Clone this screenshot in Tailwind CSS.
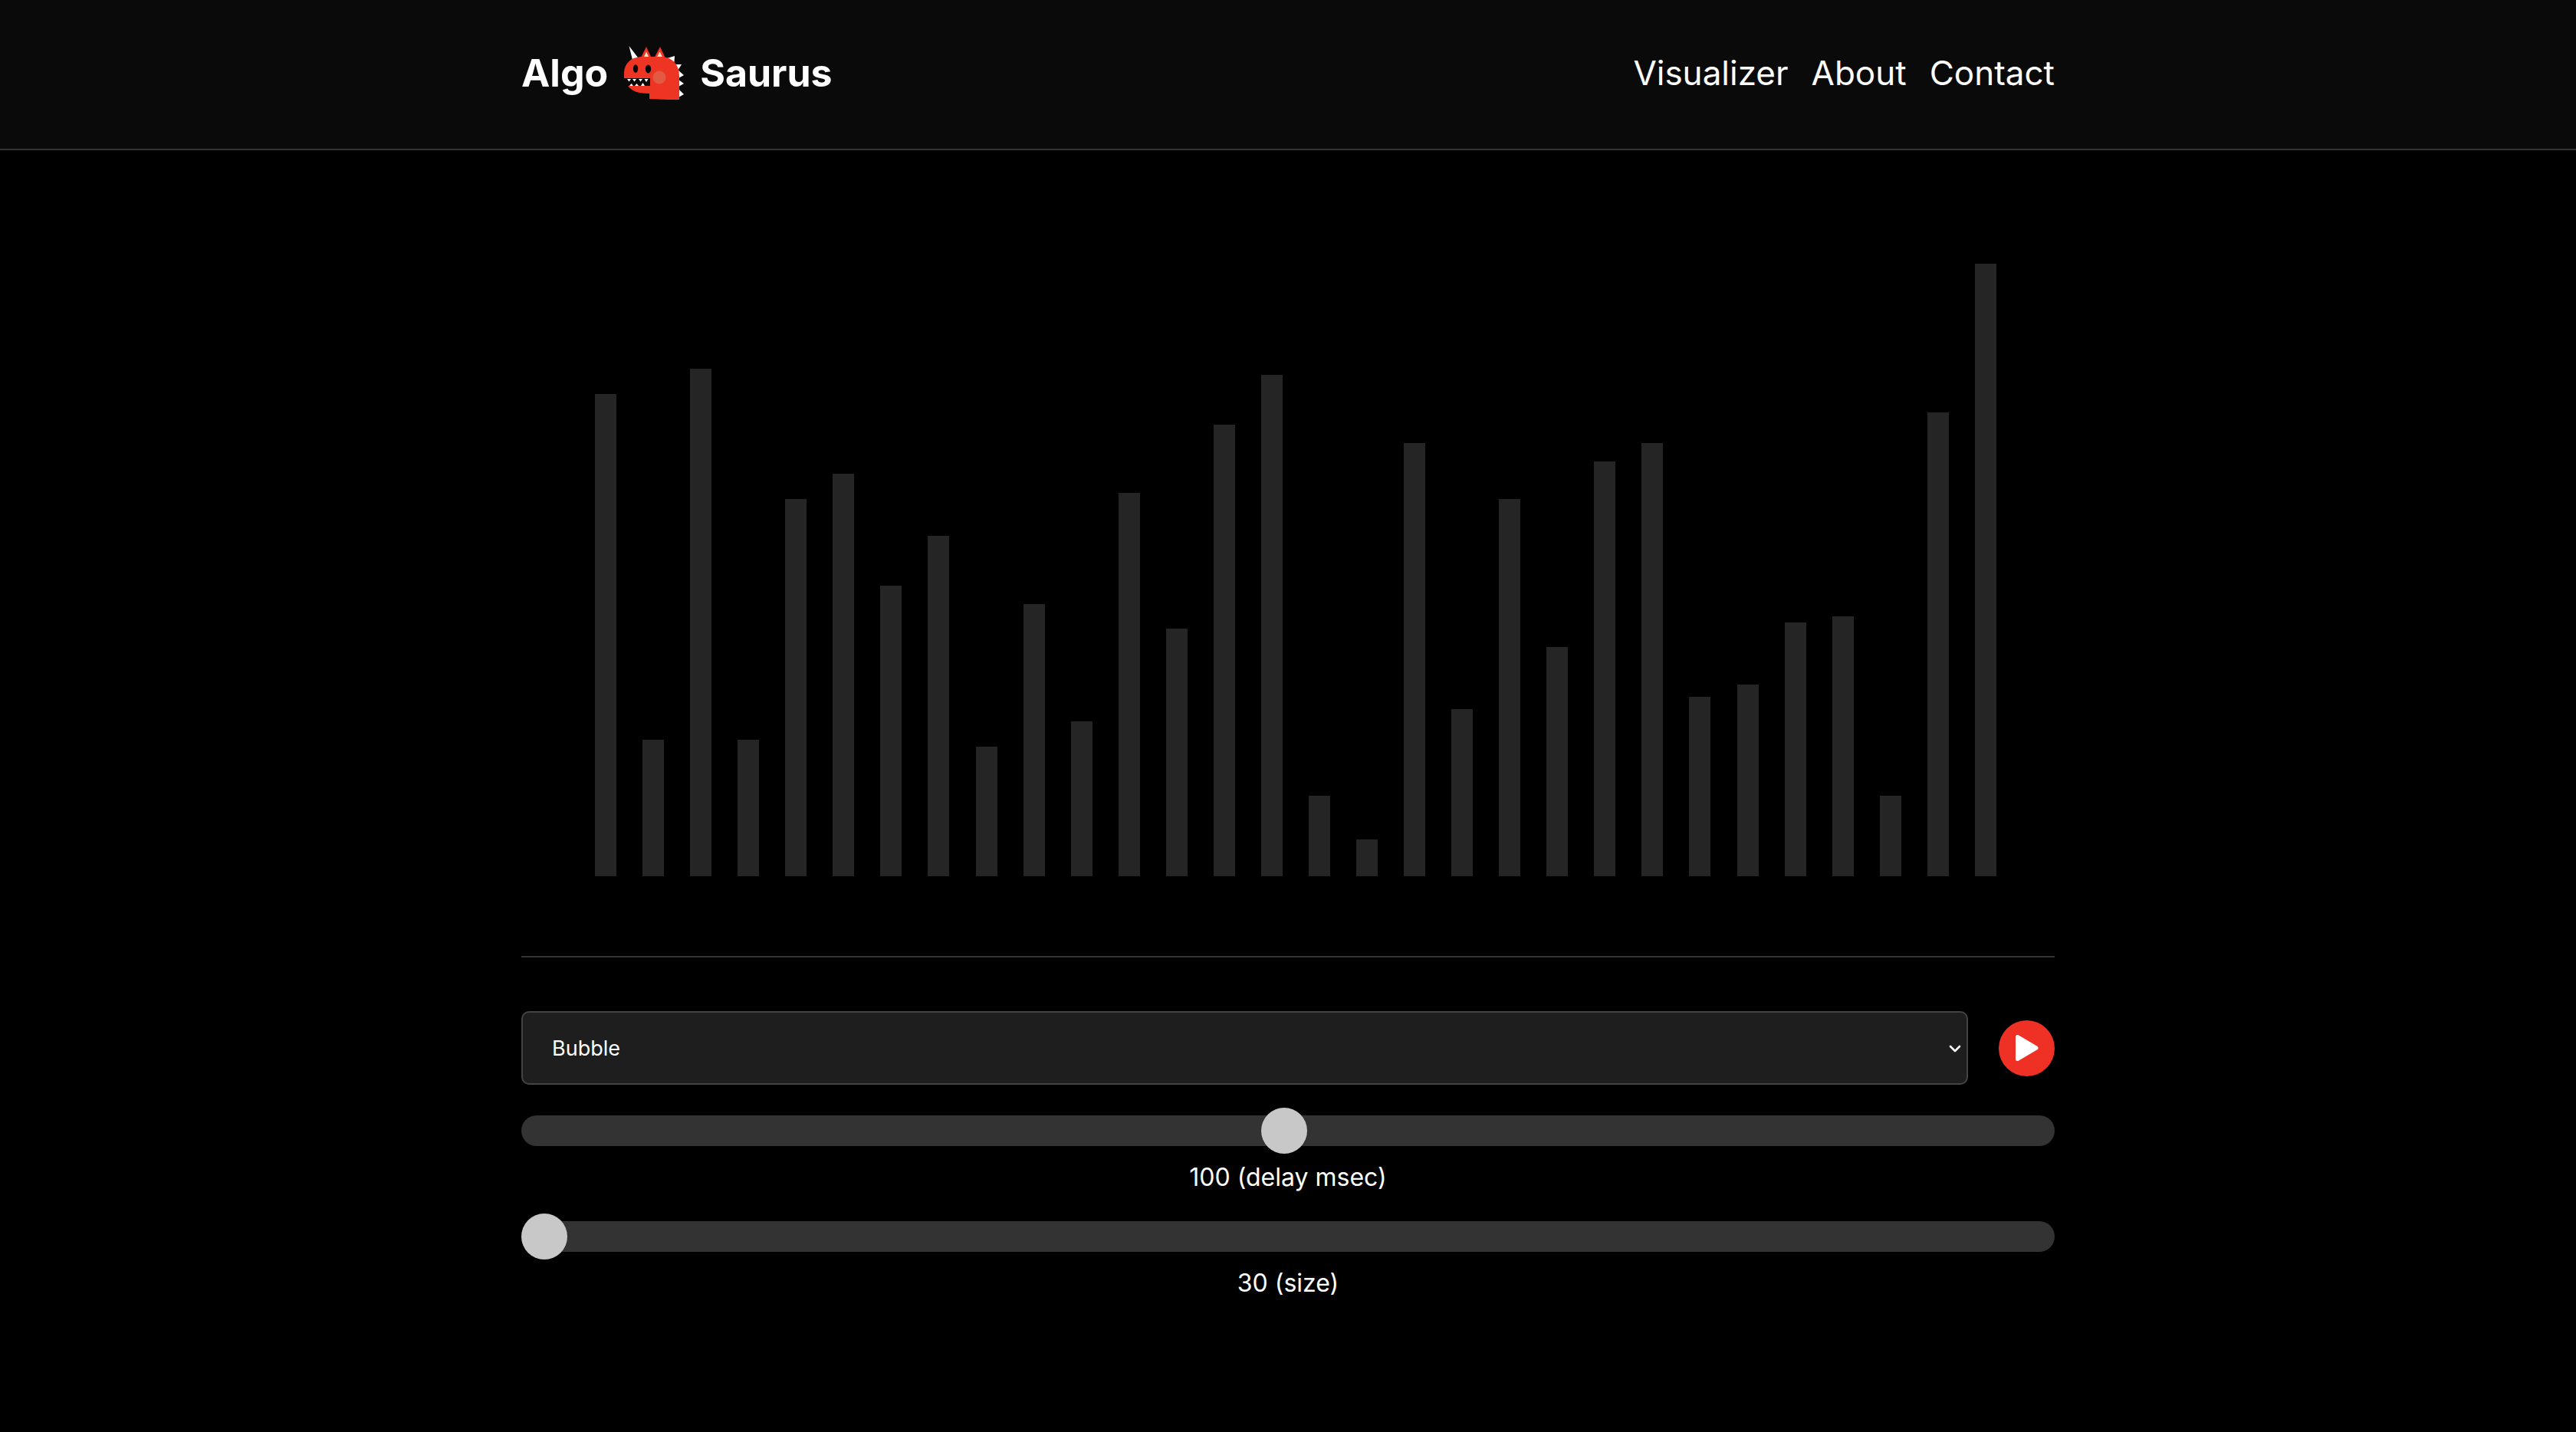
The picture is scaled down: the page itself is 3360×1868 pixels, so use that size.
<!DOCTYPE html>
<html lang="en">
<head>
<meta charset="utf-8">
<meta name="viewport" content="width=device-width, initial-scale=1">
<title>Algo Saurus</title>
<script src="https://cdn.jsdelivr.net/npm/@tailwindcss/browser@4"></script>
</head>
<body class="min-h-screen bg-black font-[Inter,sans-serif] text-white">
<header class="border-b-2 border-[#333] bg-[#0a0a0a]">
  <div class="mx-auto flex h-[194px] max-w-[2000px] items-center justify-between pb-1">
    <a href="#" class="flex items-center gap-5 text-[50px] leading-none font-bold">
      <span>Algo</span>
      <svg class="h-[74px] w-20" viewBox="0 0 80 74" aria-hidden="true">
        <path fill="#fff" d="M7.500 2 19 17 12 20zM57 18 67 15 66.500 23zM66 26 76 26 71 34zM72 34 79 40 72 44zM72 46 79 51 72 55zM72 58 79 65 72 69z"/>
        <path fill="#ee3524" d="M22.500 18 30 3 37 18zM40 18 48 3 55 18zM1 44V36C2 24 10 17 23 16H50C65 17 73 27 73 41V72H58L34 71V64C20 64 11 61 6 54H35V44z"/>
        <path fill="#ffe3c2" d="M27 16 30 9.500 33 16zM44 16 47.500 9.500 51 16z"/>
        <ellipse cx="16" cy="31.500" rx="3.200" ry="5.200" fill="#080505"/>
        <ellipse cx="32.500" cy="32" rx="3.700" ry="5.400" fill="#080505"/>
        <circle cx="47" cy="43" r="8.500" fill="#e35a43"/>
        <path fill="#fff" d="M5 45h5l-2.500 3.500zM12 45h5l-2.500 3.500zM20 45h5l-2.500 3.500zM27.500 45h5l-2.500 4zM8 54l2.500-3 2.500 3zM15 54l2.500-3 2.500 3zM23 54l2.500-4 2.500 4z"/>
      </svg>
      <span>Saurus</span>
    </a>
    <nav class="flex gap-[30px] text-[44px] leading-none">
      <a href="#">Visualizer</a>
      <a href="#">About</a>
      <a href="#">Contact</a>
    </nav>
  </div>
</header>
<main class="mx-auto max-w-[2000px]">
  <section id="bars" aria-label="Values to sort" class="mt-[140px] flex h-[807px] items-end justify-between pr-[76px] pl-24"></section>
  <hr class="mt-[104px] border-t-2 border-[#333]">
  <form class="mt-[70px]">
    <div class="flex items-center gap-10">
      <div class="relative flex-1">
        <select aria-label="Algorithm" class="block h-24 w-full appearance-none rounded-[10px] border-2 border-[#444] bg-[#1e1e1e] px-[38px] pt-0.5 text-[27px]">
          <option>Bubble</option>
        </select>
        <svg class="pointer-events-none absolute top-[44px] right-[9px] h-[10px] w-4" viewBox="0 0 16 10" fill="none" stroke="#fff" stroke-width="2.600" stroke-linecap="round" stroke-linejoin="round" aria-hidden="true"><path d="M2 2l6 6 6-6"/></svg>
      </div>
      <button type="button" aria-label="Play" class="block size-[73px] rounded-full bg-[#ee3124]">
        <svg class="size-full" viewBox="0 0 73 73" fill="#fff" stroke="#fff" stroke-width="5" stroke-linejoin="round" aria-hidden="true"><path d="M24.500 21.500v29L49 36z"/></svg>
      </button>
    </div>
    <input id="delay" type="range" min="1" max="200" value="100" class="mt-10 block h-10 w-full appearance-none rounded-full bg-[#333] [&::-webkit-slider-thumb]:size-[60px] [&::-webkit-slider-thumb]:appearance-none [&::-webkit-slider-thumb]:rounded-full [&::-webkit-slider-thumb]:bg-[#c8c8c8]">
    <label for="delay" class="mt-5 block pt-0.5 text-center text-[32px] leading-[38px]">100 (delay msec)</label>
    <input id="size" type="range" min="30" max="100" value="30" class="mt-[38px] block h-10 w-full appearance-none rounded-full bg-[#333] [&::-webkit-slider-thumb]:size-[60px] [&::-webkit-slider-thumb]:appearance-none [&::-webkit-slider-thumb]:rounded-full [&::-webkit-slider-thumb]:bg-[#c8c8c8]">
    <label for="size" class="mt-5 block pt-0.5 text-center text-[32px] leading-[38px]">30 (size)</label>
  </form>
</main>
<script>
const values = [78,22,82,22,61,65,47,55,21,44,25,62,40,73,81,13,6,70,27,61,37,67,70,29,31,41,42,13,75,99];
document.getElementById('bars').innerHTML = values.map(v => `<div class="w-7 bg-[#252525]" style="height:${v}%"></div>`).join('');
</script>
</body>
</html>
